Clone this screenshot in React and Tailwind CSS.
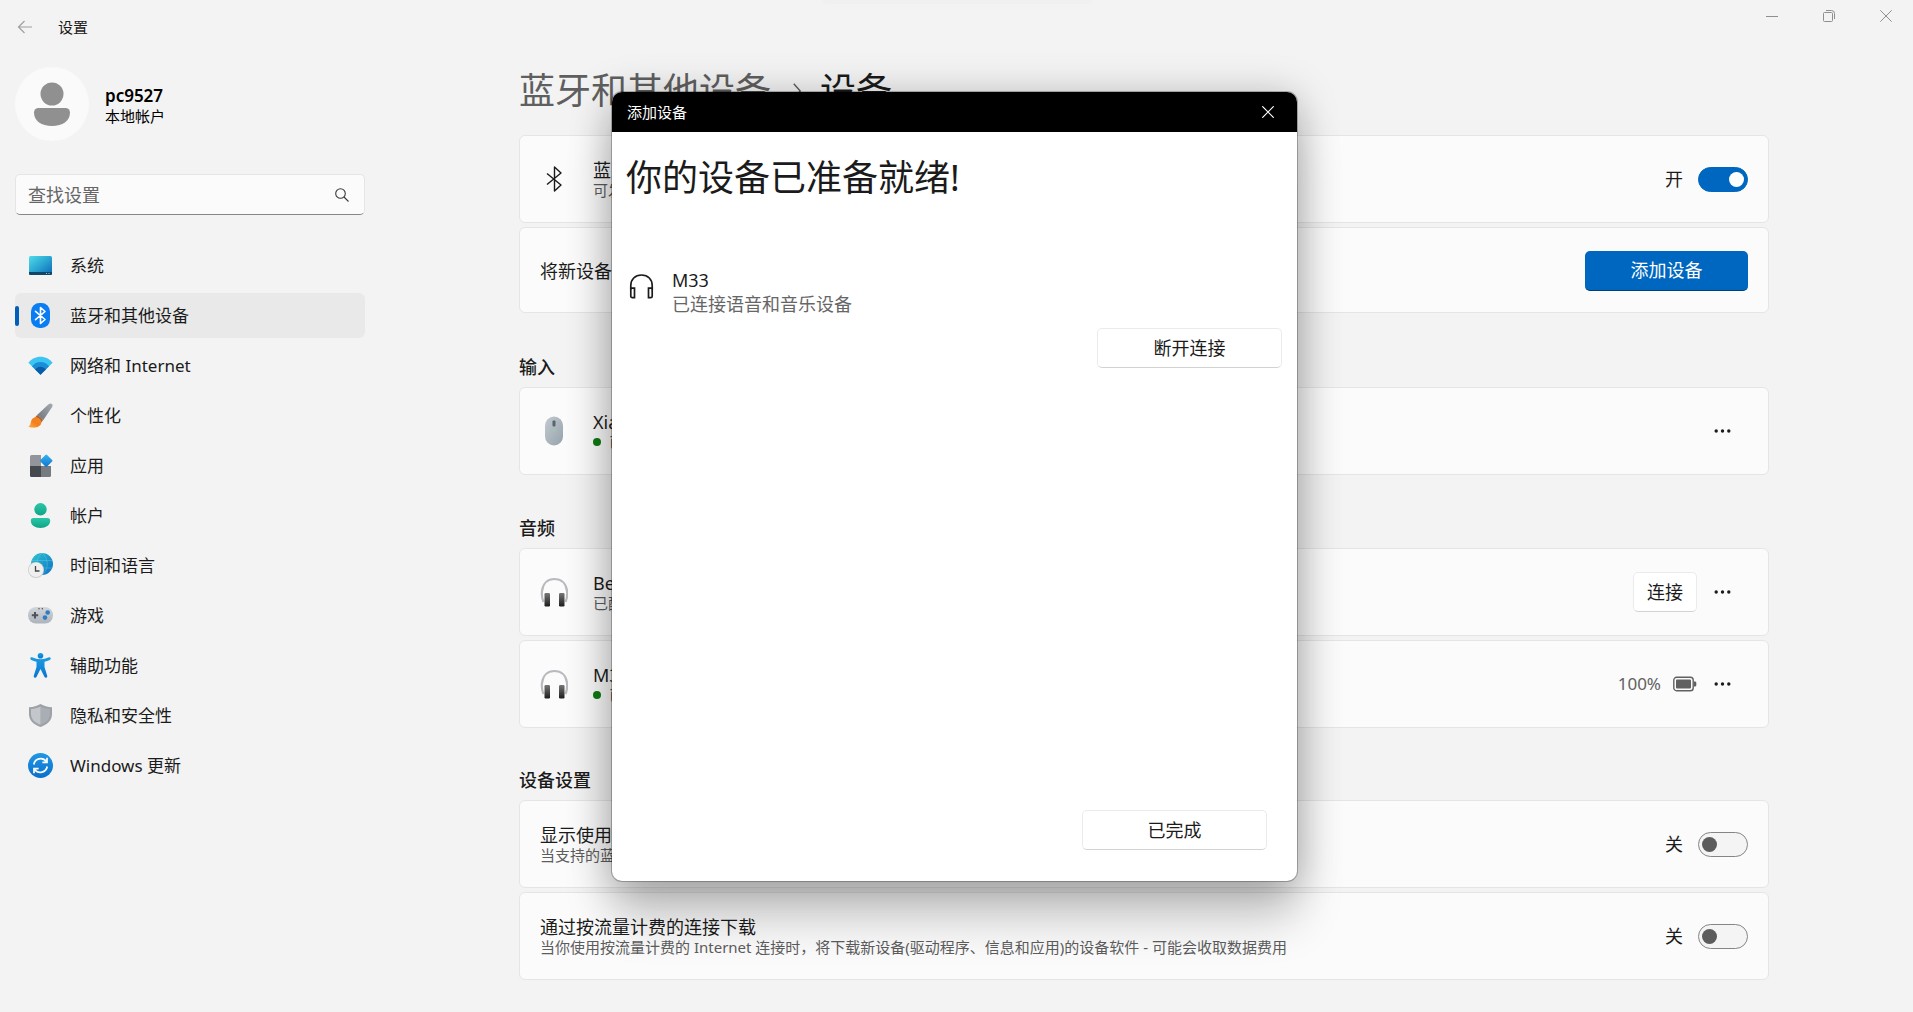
import React from "react";

/* ---------- sidebar icons ---------- */

const NavSvg = ({ children }) => (
  <svg viewBox="0 0 25 25" className="h-[25px] w-[25px]" aria-hidden="true">
    {children}
  </svg>
);

const SystemIcon = () => (
  <NavSvg>
    <defs>
      <linearGradient id="sys" x1="0" y1="0" x2="1" y2="1">
        <stop offset="0" stopColor="#50dbe8" />
        <stop offset="0.5" stopColor="#2aa5d2" />
        <stop offset="1" stopColor="#0c68b4" />
      </linearGradient>
    </defs>
    <rect x="1" y="3" width="23" height="19" rx="1.5" fill="url(#sys)" />
    <path d="M1 19h23v1.500a1.500 1.500 0 0 1-1.500 1.500h-20A1.500 1.500 0 0 1 1 20.500z" fill="#0f4669" />
    <path d="M18 20.500h1M20.500 20.500h1" stroke="#d6ecf6" strokeWidth="0.800" />
  </NavSvg>
);

const BluetoothNavIcon = () => (
  <NavSvg>
    <rect x="3" y="0" width="19" height="25" rx="8.500" fill="#0a7df2" />
    <path d="M7.500 8.300 17 16.500l-4.500 4V4.500l4.500 4-9.500 8.200" fill="none" stroke="#fff" strokeWidth="1.600" strokeLinejoin="round" strokeLinecap="round" />
  </NavSvg>
);

const WifiIcon = () => (
  <NavSvg>
    <path d="M.4 9.700C3.300 6 7.500 3.700 12.500 3.700s9.200 2.300 12.100 6L12.500 21.800z" fill="#3cc4f2" />
    <path d="M4 13.200c2.200-2.600 5-4.200 8.500-4.200s6.300 1.600 8.500 4.200l-8.500 8.600z" fill="#1a8fd8" />
    <path d="M7.200 16.400c1.400-1.600 3.100-2.600 5.300-2.600s3.900 1 5.300 2.600l-5.300 5.400z" fill="#0b5ca8" />
  </NavSvg>
);

const BrushIcon = () => (
  <NavSvg>
    <defs>
      <linearGradient id="br" x1="0" y1="1" x2="1" y2="0">
        <stop offset="0" stopColor="#6d7479" />
        <stop offset="1" stopColor="#a5abb0" />
      </linearGradient>
      <linearGradient id="bo" x1="1" y1="0" x2="0" y2="1">
        <stop offset="0" stopColor="#f28a1d" />
        <stop offset="0.500" stopColor="#f47d20" />
        <stop offset="1" stopColor="#fbb03a" />
      </linearGradient>
    </defs>
    <path d="M8.500 12.500 20.600 1.200c2.200-1.900 4.900-.2 3.700 2.500L15 17.500c-1-2.400-3.500-4.600-6.500-5z" fill="url(#br)" />
    <path d="M8.700 12.400c3 .4 5.400 2.500 6.200 5.200l-1.900 2.100-6-5.200z" fill="#a5653a" />
    <path d="M7.800 14.200c3 0 5.500 2.400 5.500 5 0 4-4.600 5.700-8.800 5.400-1.800-.1-3.400-.6-4.200-1.400 1.700-.3 2-1.300 2.400-3.400.6-3.200 2.200-5.600 5.100-5.600z" fill="url(#bo)" />
  </NavSvg>
);

const AppsIcon = () => (
  <NavSvg>
    <defs>
      <linearGradient id="ap" x1="0" y1="0" x2="1" y2="1">
        <stop offset="0" stopColor="#36b9f0" />
        <stop offset="1" stopColor="#0f70cc" />
      </linearGradient>
    </defs>
    <path d="M3.500 2H13v11H2V3.500A1.500 1.500 0 0 1 3.500 2z" fill="#92969c" />
    <path d="M2 13h11v11H3.500A1.500 1.500 0 0 1 2 22.500z" fill="#45494e" />
    <path d="M13 13h10v9.500a1.500 1.500 0 0 1-1.500 1.500H13z" fill="#767b82" />
    <rect x="13.500" y="3" width="9.500" height="9.500" rx="1.200" fill="url(#ap)" transform="rotate(45 18.250 7.750)" />
  </NavSvg>
);

const AccountIcon = () => (
  <NavSvg>
    <defs>
      <linearGradient id="ac" x1="0" y1="0" x2="0" y2="1">
        <stop offset="0" stopColor="#2bc6a8" />
        <stop offset="1" stopColor="#0fa587" />
      </linearGradient>
    </defs>
    <circle cx="12.500" cy="6.300" r="6.200" fill="url(#ac)" />
    <path d="M5.500 15h14a2.700 2.700 0 0 1 2.700 2.700c0 4.300-4.200 7.200-9.700 7.200s-9.700-2.900-9.700-7.200A2.700 2.700 0 0 1 5.500 15z" fill="url(#ac)" />
  </NavSvg>
);

const TimeIcon = () => (
  <NavSvg>
    <defs>
      <linearGradient id="tm" x1="0" y1="0" x2="1" y2="1">
        <stop offset="0" stopColor="#2fc6cf" />
        <stop offset="1" stopColor="#0c6fc4" />
      </linearGradient>
    </defs>
    <circle cx="14" cy="11" r="11" fill="url(#tm)" />
    <path d="M14 0c-7 6-7 16 0 22M14 0c7 6 7 16 0 22M3.500 7.500h21M3.500 15h21" fill="none" stroke="#7fdcf0" strokeWidth="0.600" opacity="0.500" />
    <circle cx="8" cy="17" r="8" fill="#c9cdd0" />
    <circle cx="8" cy="16.800" r="7.300" fill="#efefef" />
    <path d="M7.500 13v5h4" fill="none" stroke="#444" strokeWidth="1.300" />
  </NavSvg>
);

const GameIcon = () => (
  <NavSvg>
    <defs>
      <linearGradient id="gm" x1="0" y1="0" x2="0" y2="1">
        <stop offset="0" stopColor="#d3d7dc" />
        <stop offset="1" stopColor="#adb3ba" />
      </linearGradient>
    </defs>
    <rect x="0" y="4" width="25" height="16.500" rx="8" fill="url(#gm)" />
    <path d="M7 9v6.500M3.800 12.200h6.400" stroke="#4f545a" strokeWidth="2" />
    <circle cx="11" cy="5.800" r="0.700" fill="#444" />
    <circle cx="14.300" cy="5.800" r="0.700" fill="#444" />
    <circle cx="19.700" cy="9.500" r="2.300" fill="#2f7cc4" />
    <circle cx="17" cy="14.600" r="2.300" fill="#2f7cc4" />
  </NavSvg>
);

const AccessIcon = () => (
  <NavSvg>
    <defs>
      <linearGradient id="ax" x1="0" y1="0" x2="0" y2="1">
        <stop offset="0" stopColor="#1a9de4" />
        <stop offset="1" stopColor="#0d74cf" />
      </linearGradient>
    </defs>
    <circle cx="12.500" cy="2.800" r="2.800" fill="url(#ax)" />
    <path
      d="M4 4.300c3 1.200 5.500 2 8.500 2s5.500-.8 8.500-2c1.800-.6 2.400 2 .8 2.700-1.700.8-3.500 1.300-5.300 1.800v5.200l2.700 8.800c.5 2-2 2.900-2.800 1L12.500 16l-3.900 7.800c-.8 1.900-3.300 1-2.800-1L8.500 14V8.800C6.700 8.300 4.900 7.800 3.200 7c-1.600-.7-1-3.300.8-2.700z"
      fill="url(#ax)"
    />
  </NavSvg>
);

const ShieldIcon = () => (
  <NavSvg>
    <path d="M12.500 1c3.400 2 7 3 11.500 3.200V11c0 6.500-4.500 10.500-11.500 13C5.500 21.500 1 17.500 1 11V4.200C5.500 4 9.100 3 12.500 1z" fill="#9ca1a7" />
    <path d="M12.500 3.500c3 1.500 6 2.300 9.500 2.600V11c0 5.200-3.500 8.500-9.500 10.800z" fill="#a9aeb4" />
    <path d="M12.500 3.500c-3 1.500-6 2.300-9.500 2.600V11c0 5.200 3.500 8.500 9.500 10.800z" fill="#c3c7cb" />
  </NavSvg>
);

const UpdateIcon = () => (
  <NavSvg>
    <defs>
      <linearGradient id="up" x1="0" y1="0" x2="0" y2="1">
        <stop offset="0" stopColor="#1f97e6" />
        <stop offset="1" stopColor="#0b6fcb" />
      </linearGradient>
    </defs>
    <circle cx="12.500" cy="12.500" r="12.500" fill="url(#up)" />
    <g fill="none" stroke="#fff" strokeWidth="1.700">
      <path d="M5.800 11.500a7 7 0 0 1 12.500-3" />
      <path d="M19.200 13.500a7 7 0 0 1-12.500 3" />
      <path d="M19 4.800v4.600h-4.600M6 20.200v-4.600h4.600" />
    </g>
  </NavSvg>
);

const NAV = [
  { label: "系统", Icon: SystemIcon },
  { label: "蓝牙和其他设备", Icon: BluetoothNavIcon, active: true },
  { label: "网络和 Internet", Icon: WifiIcon },
  { label: "个性化", Icon: BrushIcon },
  { label: "应用", Icon: AppsIcon },
  { label: "帐户", Icon: AccountIcon },
  { label: "时间和语言", Icon: TimeIcon },
  { label: "游戏", Icon: GameIcon },
  { label: "辅助功能", Icon: AccessIcon },
  { label: "隐私和安全性", Icon: ShieldIcon },
  { label: "Windows 更新", Icon: UpdateIcon },
];

/* ---------- content icons ---------- */

const BluetoothIcon = () => (
  <svg viewBox="0 0 28 28" className="h-7 w-7" aria-hidden="true">
    <path d="M7 8.500l14 11.500-6.500 6V2l6.500 6L7 19.500" fill="none" stroke="#1b1b1b" strokeWidth="1.400" strokeLinejoin="round" />
  </svg>
);

const MouseIcon = () => (
  <svg viewBox="0 0 28 30" className="h-[30px] w-7" aria-hidden="true">
    <defs>
      <linearGradient id="ms" x1="0" y1="0" x2="1" y2="1">
        <stop offset="0" stopColor="#c3cbd1" />
        <stop offset="1" stopColor="#96a1aa" />
      </linearGradient>
    </defs>
    <rect x="5" y="0.500" width="18" height="29" rx="9" fill="url(#ms)" />
    <rect x="12.500" y="4.500" width="3" height="6" rx="1" fill="#59656e" />
    <path d="M12.500 14.500h3" stroke="#8fd39f" strokeWidth="1.500" />
  </svg>
);

const HeadphonesColorIcon = () => (
  <svg viewBox="0 0 28 30" className="h-[30px] w-7" aria-hidden="true">
    <defs>
      <linearGradient id="hp" x1="0" y1="0" x2="0" y2="1">
        <stop offset="0" stopColor="#777" />
        <stop offset="1" stopColor="#1c1c1c" />
      </linearGradient>
    </defs>
    <path d="M3.500 25C1.800 21 1.600 17 2 14 3 6 8 2 14.500 2S26 6 27 14c.4 3 .2 7-1.500 11" fill="none" stroke="#b9babf" strokeWidth="2.200" />
    <rect x="4.500" y="16" width="5.500" height="13.500" rx="1.200" fill="url(#hp)" />
    <rect x="19" y="16" width="5.500" height="13.500" rx="1.200" fill="url(#hp)" />
  </svg>
);

const HeadphonesIcon = () => (
  <svg viewBox="0 0 25 25" className="mt-[6px] h-[25px] w-[25px]" aria-hidden="true">
    <g fill="none" stroke="#1b1b1b" strokeWidth="1.700">
      <path d="M1.800 15.500v-4C1.800 5.500 6 1 12.500 1s10.700 4.500 10.700 10.500v4" />
      <path d="M1.800 14.200h3.700v9.500H3.300a1.500 1.500 0 0 1-1.500-1.500zM23.200 14.200h-3.700v9.500h2.200a1.500 1.500 0 0 0 1.500-1.500z" />
    </g>
  </svg>
);

const BatteryIcon = () => (
  <svg viewBox="0 0 24 16" className="h-4 w-6" aria-hidden="true">
    <rect x="0.800" y="1.300" width="19.400" height="13.400" rx="2.800" fill="none" stroke="#606060" strokeWidth="1.400" />
    <rect x="3" y="3.500" width="15" height="9" rx="1" fill="#606060" />
    <path d="M21 5.500h1a1.300 1.300 0 0 1 1.300 1.300v2.400A1.300 1.300 0 0 1 22 10.500h-1z" fill="#606060" />
  </svg>
);

/* ---------- shared pieces ---------- */

const Card = ({ children, tall = true }) => (
  <div
    className={
      "flex items-center rounded-md border border-[#e5e5e5] bg-[#fbfbfb] pl-5 pr-5 " +
      (tall ? "min-h-[88px]" : "min-h-[86px]")
    }
  >
    {children}
  </div>
);

const RowText = ({ title, sub, online }) => (
  <div className="min-w-0 flex-1 pt-[2px]">
    <div className="text-[18px] leading-5">{title}</div>
    {sub && (
      <div className="flex items-center gap-2 text-[15px] leading-5 text-[#5d5d5d]">
        {online && <span className="h-2 w-2 rounded-full bg-[#0f7b0f]" />}
        <span>{sub}</span>
      </div>
    )}
  </div>
);

const Toggle = ({ id, on, label }) => (
  <label className="flex items-center gap-[15px] text-[18px] leading-6">
    <span>{on ? "开" : "关"}</span>
    <input
      id={id}
      type="checkbox"
      role="switch"
      aria-label={label}
      defaultChecked={on}
      className="h-[25px] w-[50px] appearance-none rounded-full border border-[#858585] bg-[#f4f4f4] px-[3px] py-1 before:block before:h-[15px] before:w-[15px] before:rounded-full before:bg-[#5c5c5c] checked:border-[#0067c0] checked:bg-[#0067c0] checked:before:ml-auto checked:before:bg-white"
    />
  </label>
);

const MoreButton = () => (
  <button type="button" aria-label="更多选项" className="flex h-10 w-[51px] items-center justify-center">
    <svg viewBox="0 0 17 4" className="h-1 w-[17px]" aria-hidden="true">
      <circle cx="2.200" cy="2" r="1.700" fill="#1b1b1b" />
      <circle cx="8.500" cy="2" r="1.700" fill="#1b1b1b" />
      <circle cx="14.800" cy="2" r="1.700" fill="#1b1b1b" />
    </svg>
  </button>
);

const LightButton = ({ children, className }) => (
  <button
    type="button"
    className={
      "h-10 rounded-[5px] border border-[#ebebeb] border-b-[#d2d2d2] bg-white text-[18px] leading-6 text-[#1b1b1b] " +
      className
    }
  >
    {children}
  </button>
);

const SectionTitle = ({ children }) => (
  <h2 className="mb-2 text-[18px] font-medium leading-6">{children}</h2>
);

/* ---------- page ---------- */

const TitleBar = () => (
  <header className="flex h-14 items-start">
    <div className="flex flex-1 items-center gap-[25px] pl-[17px] pt-[15px]">
      <button type="button" aria-label="返回" className="flex h-6 w-4 items-center">
        <svg viewBox="0 0 16 14" className="h-[14px] w-4" aria-hidden="true">
          <path d="M15 7H1.500M7.500 1l-6 6 6 6" fill="none" stroke="#a0a0a0" strokeWidth="1.200" />
        </svg>
      </button>
      <h1 className="text-[15px] leading-6">设置</h1>
    </div>
    <div className="flex gap-[21px] pr-[9px]">
      <button type="button" aria-label="最小化" className="flex h-8 w-9 items-center justify-center">
        <svg viewBox="0 0 12 12" className="h-3 w-3" aria-hidden="true">
          <path d="M0 6.500h12" stroke="#8f8f8f" />
        </svg>
      </button>
      <button type="button" aria-label="还原" className="flex h-8 w-9 items-center justify-center">
        <svg viewBox="0 0 12 12" className="h-3 w-3" aria-hidden="true">
          <g fill="none" stroke="#8f8f8f">
            <rect x="0.500" y="2.500" width="9" height="9" rx="1" />
            <path d="M3 .5h5.500a3 3 0 0 1 3 3V9" />
          </g>
        </svg>
      </button>
      <button type="button" aria-label="关闭" className="flex h-8 w-9 items-center justify-center">
        <svg viewBox="0 0 12 12" className="h-3 w-3" aria-hidden="true">
          <path d="M.3.3l11.400 11.400M11.700.3L.3 11.700" stroke="#8f8f8f" />
        </svg>
      </button>
    </div>
  </header>
);

const Sidebar = () => (
  <aside className="w-[375px] shrink-0 pl-[15px] pr-[10px] pt-[11px]">
    <div className="flex items-center gap-4">
      <svg viewBox="0 0 74 74" className="h-[74px] w-[74px]" aria-hidden="true">
        <circle cx="37" cy="37" r="37" fill="#fafafa" />
        <circle cx="37" cy="27" r="11.500" fill="#909090" />
        <path d="M23.500 41h27a4.500 4.500 0 0 1 4.500 4.500C55 54 47.500 59 37 59s-18-5-18-13.500a4.500 4.500 0 0 1 4.500-4.500z" fill="#909090" />
      </svg>
      <div>
        <div className="text-[17px] font-semibold leading-6 text-black">pc9527</div>
        <div className="text-[15px] leading-4 text-black">本地帐户</div>
      </div>
    </div>

    <label className="mt-[33px] flex h-[41px] items-center rounded-[5px] border border-[#e5e5e5] border-b-[#868686] bg-[#fbfbfb] pl-3 pr-[15px]">
      <input
        type="search"
        aria-label="查找设置"
        placeholder="查找设置"
        className="min-w-0 flex-1 bg-transparent text-[18px] leading-6 outline-none placeholder:text-[#666]"
      />
      <svg viewBox="0 0 14 14" className="h-[14px] w-[14px]" aria-hidden="true">
        <circle cx="5.500" cy="5.500" r="4.800" fill="none" stroke="#3a3a3a" strokeWidth="1.100" />
        <path d="M9 9l4.500 4.500" stroke="#3a3a3a" strokeWidth="1.100" />
      </svg>
    </label>

    <nav className="mt-7">
      <ul className="flex flex-col gap-[5px]">
        {NAV.map(({ label, Icon, active }) => (
          <li key={label}>
            <a
              href="#"
              className={
                "relative flex h-[45px] items-center gap-[17px] rounded-md pl-[13px] text-[17px] leading-6 " +
                (active ? "bg-[#e9e9e9]" : "")
              }
            >
              {active && <span className="absolute left-0 h-5 w-1 rounded-full bg-[#005fb8]" />}
              <Icon />
              <span>{label}</span>
            </a>
          </li>
        ))}
      </ul>
    </nav>
  </aside>
);

const Content = () => (
  <main className="flex-1 pt-[11px]">
    <div className="mx-auto max-w-[1250px]">
      <h2 className="flex items-center text-[36px] leading-[48px] text-[#1b1b1b]">
        <span className="text-[#5f5f5f]">蓝牙和其他设备</span>
        <svg viewBox="0 0 12 20" className="ml-[21px] mr-[18px] h-4 w-[10px]" aria-hidden="true">
          <path d="M2 1l8 9-8 9" fill="none" stroke="#5f5f5f" strokeWidth="1.800" />
        </svg>
        <span>设备</span>
      </h2>

      <section className="mt-5 flex flex-col gap-1">
        <Card>
          <div className="mr-[25px]">
            <BluetoothIcon />
          </div>
          <RowText title="蓝牙" sub="可发现为" />
          <Toggle id="bt" on label="蓝牙" />
        </Card>
        <Card tall={false}>
          <RowText title="将新设备与电脑配对" />
          <button
            type="button"
            className="mt-px h-10 w-[163px] rounded-[5px] border-b border-[#003e73] bg-[#0067c0] text-[18px] leading-6 text-white"
          >
            添加设备
          </button>
        </Card>
      </section>

      <section className="mt-[42px]">
        <SectionTitle>输入</SectionTitle>
        <Card>
          <div className="mr-[25px]">
            <MouseIcon />
          </div>
          <RowText title="Xiaomi" sub="已连接" online />
          <MoreButton />
        </Card>
      </section>

      <section className="mt-[41px]">
        <SectionTitle>音频</SectionTitle>
        <div className="flex flex-col gap-1">
          <Card>
            <div className="mr-[25px]">
              <HeadphonesColorIcon />
            </div>
            <RowText title="Beats" sub="已配对" />
            <LightButton className="w-16">连接</LightButton>
            <MoreButton />
          </Card>
          <Card>
            <div className="mr-[25px]">
              <HeadphonesColorIcon />
            </div>
            <RowText title="M33" sub="已连接" online />
            <span className="mr-3 text-[17px] leading-6 text-[#606060]">100%</span>
            <BatteryIcon />
            <MoreButton />
          </Card>
        </div>
      </section>

      <section className="mt-10">
        <SectionTitle>设备设置</SectionTitle>
        <div className="flex flex-col gap-1">
          <Card>
            <RowText title="显示使用“快速配对”的通知" sub="当支持的蓝牙设备在附近时" />
            <Toggle id="swift" label="显示通知" />
          </Card>
          <Card>
            <RowText
              title="通过按流量计费的连接下载"
              sub="当你使用按流量计费的 Internet 连接时，将下载新设备(驱动程序、信息和应用)的设备软件 - 可能会收取数据费用"
            />
            <Toggle id="metered" label="通过按流量计费的连接下载" />
          </Card>
        </div>
      </section>
    </div>
  </main>
);

const AddDeviceDialog = () => (
  <div className="absolute inset-0 flex items-start justify-center pr-1 pt-[92px]">
    <div
      role="dialog"
      aria-label="添加设备"
      className="flex min-h-[789px] w-[685px] flex-col overflow-hidden rounded-[10px] bg-white shadow-[0_0_0_1px_rgba(0,0,0,0.25),0_38px_48px_rgba(0,0,0,0.2),0_4px_40px_rgba(0,0,0,0.26)]"
    >
      <div className="flex h-10 items-center justify-between bg-black pl-[15px] pr-[19px] text-white">
        <span className="text-[15px] leading-6">添加设备</span>
        <button type="button" aria-label="关闭" className="flex h-8 w-5 items-center justify-center">
          <svg viewBox="0 0 12 12" className="h-3 w-3" aria-hidden="true">
            <path d="M.3.3l11.400 11.400M11.700.3L.3 11.700" stroke="#fff" strokeWidth="1.200" />
          </svg>
        </button>
      </div>
      <h2 className="px-[14px] pt-[22px] text-[36px] leading-[48px] text-[#1b1b1b]">你的设备已准备就绪!</h2>
      <div className="mt-[66px] flex items-start gap-[18px] pl-[17px]">
        <HeadphonesIcon />
        <div>
          <div className="text-[18px] leading-6">M33</div>
          <div className="text-[18px] leading-6 text-[#666]">已连接语音和音乐设备</div>
        </div>
      </div>
      <div className="mt-3 flex justify-end pr-[15px]">
        <LightButton className="w-[185px]">断开连接</LightButton>
      </div>
      <div className="mt-auto flex justify-end pb-[31px] pr-[30px]">
        <LightButton className="w-[185px]">已完成</LightButton>
      </div>
    </div>
  </div>
);

export default function App() {
  return (
    <div className="relative min-h-screen bg-[#f3f3f3] font-['Noto_Sans','Noto_Sans_CJK_SC',sans-serif] font-[390] text-[#1b1b1b]">
      <div className="absolute inset-x-0 top-0 mx-auto h-1 w-[270px] rounded-b bg-[#f0f0f0]" />
      <TitleBar />
      <div className="flex">
        <Sidebar />
        <Content />
      </div>
      <AddDeviceDialog />
    </div>
  );
}
